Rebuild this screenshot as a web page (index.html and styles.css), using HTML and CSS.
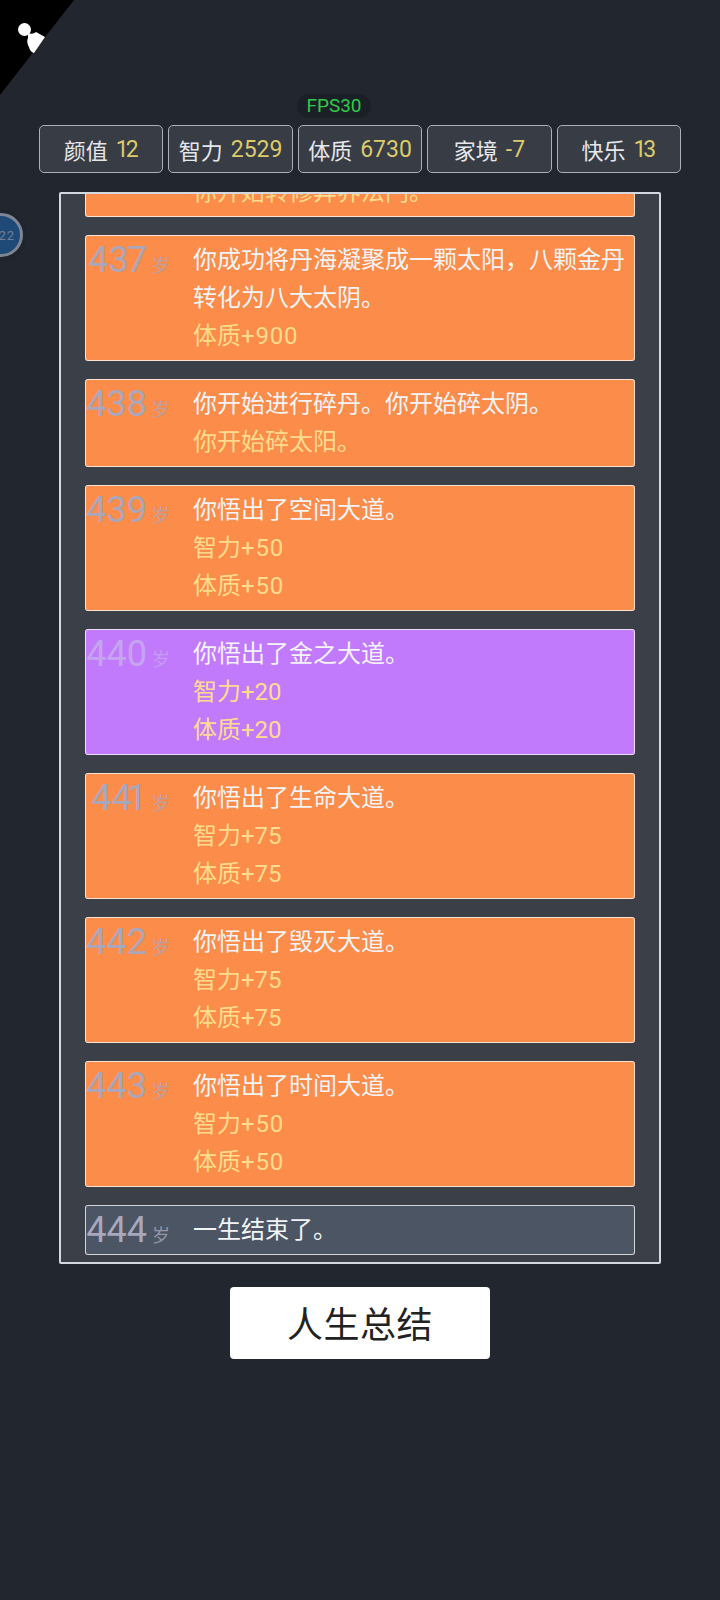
FILE: index.html
```html
<!DOCTYPE html>
<html lang="zh">
<head>
<meta charset="utf-8">
<title>人生重开</title>
<link rel="stylesheet" href="styles.css">
</head>
<body>
<div class="corner">
  <svg class="corner-icon" viewBox="0 0 74 95" width="74" height="95">
    <polygon points="0,0 74,0 0,95" fill="#000"/>
    <circle cx="24.500" cy="29.500" r="6.500" fill="#fff"/>
    <path d="M28 33 Q33 35 36 32 L45 37 L34 53 Q30 52 29 47 Q26 42 28 38 Z" fill="#fff"/>
  </svg>
</div>
<div class="orb"><span>22</span></div>
<main class="page">
  <div class="fps">FPS30</div>
  <section class="stats">
    <div class="stat">颜值<b><span class="one">1</span>2</b></div>
    <div class="stat">智力<b>2529</b></div>
    <div class="stat">体质<b>6730</b></div>
    <div class="stat">家境<b>-7</b></div>
    <div class="stat">快乐<b><span class="one">1</span>3</b></div>
  </section>
  <section class="panel">
    <div class="row orange"><div class="age"></div><div class="txt"><p class="gold">你开始转修异界法门。</p></div></div>
    <div class="row orange"><div class="age"><span class="num">4<span class="snug">3</span>7</span><span class="sui">岁</span></div><div class="txt"><p>你成功将丹海凝聚成一颗太阳，八颗金丹转化为八大太阴。</p><p class="gold">体质<span class="wide">+900</span></p></div></div>
    <div class="row orange"><div class="age"><span class="num">438</span><span class="sui">岁</span></div><div class="txt"><p>你开始进行碎丹。你开始碎太阴。</p><p class="gold">你开始碎太阳。</p></div></div>
    <div class="row orange"><div class="age"><span class="num">439</span><span class="sui">岁</span></div><div class="txt"><p>你悟出了空间大道。</p><p class="gold">智力<span class="wide">+50</span></p><p class="gold">体质<span class="wide">+50</span></p></div></div>
    <div class="row purple"><div class="age"><span class="num">440</span><span class="sui">岁</span></div><div class="txt"><p>你悟出了金之大道。</p><p class="gold">智力+20</p><p class="gold">体质+20</p></div></div>
    <div class="row orange"><div class="age"><span class="num">4<span class="tight">4</span>1</span><span class="sui">岁</span></div><div class="txt"><p>你悟出了生命大道。</p><p class="gold">智力+75</p><p class="gold">体质+75</p></div></div>
    <div class="row orange"><div class="age"><span class="num">442</span><span class="sui">岁</span></div><div class="txt"><p>你悟出了毁灭大道。</p><p class="gold">智力+75</p><p class="gold">体质+75</p></div></div>
    <div class="row orange"><div class="age"><span class="num">443</span><span class="sui">岁</span></div><div class="txt"><p>你悟出了时间大道。</p><p class="gold">智力<span class="wide">+50</span></p><p class="gold">体质<span class="wide">+50</span></p></div></div>
    <div class="row slate"><div class="age"><span class="num">444</span><span class="sui">岁</span></div><div class="txt"><p>一生结束了。</p></div></div>
  </section>
  <button class="summary">人生总结</button>
</main>
</body>
</html>
```
FILE: styles.css
```css
* { box-sizing: border-box; }
html, body { margin: 0; height: 1600px; overflow: hidden; }
body {
  background: #22262f;
  font-family: Roboto, "Noto Sans CJK SC", sans-serif;
  color: #e8eaee;
}
p { margin: 0; }

.corner { position: absolute; left: 0; top: 0; line-height: 0; }
.orb {
  position: absolute;
  left: -21px;
  top: 213px;
  width: 44px;
  height: 44px;
  border-radius: 50%;
  background: #1f4a78;
  border: 3px solid #7d8694;
  box-shadow: 0 0 0 4px #20242c;
  display: flex;
  align-items: center;
  justify-content: flex-end;
  font-size: 13px;
  letter-spacing: 1px;
  color: #6f8096;
  padding-right: 5px;
}

.page {
  display: flex;
  flex-direction: column;
  align-items: center;
  padding-top: 94px;
}
.fps {
  height: 24px;
  padding: 0 9px;
  margin-right: 52px;
  border-radius: 12px;
  background: #1b2027;
  color: #30c94a;
  font-size: 19px;
  line-height: 24px;
  margin-bottom: 7px;
}
.stats {
  display: flex;
  gap: 5px;
  width: 642px;
}
.stat {
  flex: 1;
  height: 48px;
  border: 1px solid #a9aeb7;
  border-radius: 5px;
  background: #373c45;
  display: flex;
  align-items: center;
  justify-content: center;
  gap: 8px;
  font-size: 22px;
  color: #e5e7eb;
}
.stat b { font-weight: 400; font-size: 23px; color: #dccb6a; }
.one { letter-spacing: -3px; }

.panel {
  margin-top: 19px;
  width: 602px;
  height: 1072px;
  border: 2px solid #d5d8de;
  border-radius: 2px;
  background: #3a3f48;
  display: flex;
  flex-direction: column;
  justify-content: flex-end;
  gap: 18px;
  overflow: hidden;
  padding: 0 24px 7px;
}
.row {
  flex: none;
  display: flex;
  padding: 5px 0;
  border: 1px solid rgba(255, 255, 255, .75);
  border-radius: 3px;
  overflow: hidden;
}
.orange { background: #fb8c4a; }
.purple { background: #c27afc; }
.slate { background: #4b5563; }
.age {
  flex: none;
  width: 107px;
  height: 38px;
  padding-right: 23px;
  display: flex;
  justify-content: flex-end;
  align-items: baseline;
  gap: 5px;
  color: #a9a7bb;
}
.purple .age { color: #c5a5ef; }
.num { font-size: 36px; line-height: 38px; }
.tight { letter-spacing: -5px; }
.snug { letter-spacing: -2px; }
.sui { font-size: 18px; opacity: .8; }
.txt {
  width: 432px;
  font-size: 24px;
  line-height: 38px;
  color: #f3f4f6;
}
.gold { color: #fedc8e; }
.wide { letter-spacing: .8px; }

.summary {
  margin-top: 23px;
  width: 260px;
  height: 72px;
  border: 0;
  border-radius: 4px;
  background: #fff;
  color: #222;
  font-family: inherit;
  font-size: 36px;
  letter-spacing: .5px;
  padding: 0 0 3px;
}
```
